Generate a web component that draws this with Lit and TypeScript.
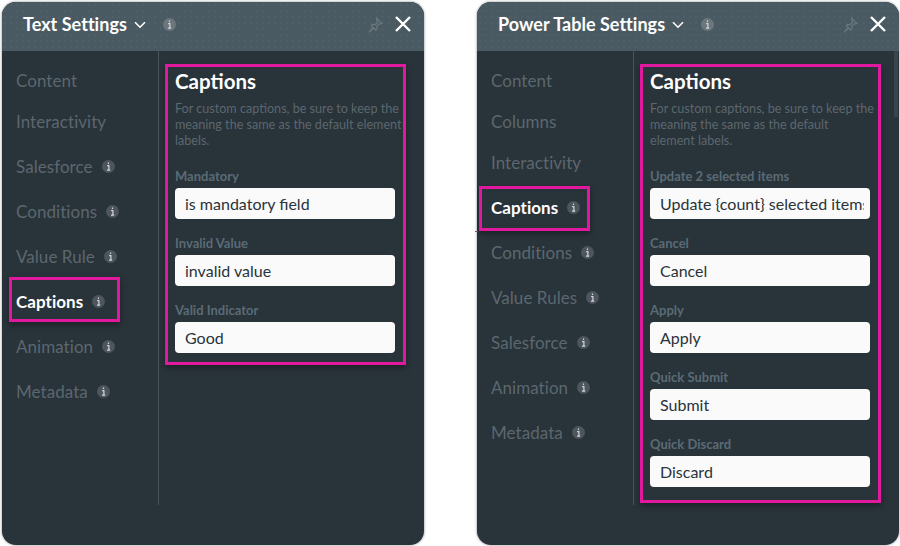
import { LitElement, html, css } from "lit";
import { customElement } from "lit/decorators.js";

const info = html`<svg class="info" viewBox="0 0 13 13" width="13" height="13"><circle cx="6.5" cy="6.5" r="6.5" fill="#4c565c"/><path d="M6.5 2.4v1.6M5.1 5.6h1.8v4.4M5 10.2h3.2" stroke="#d2d6d8" stroke-width="1.2" fill="none"/></svg>`;

type Nav = { t: string; i?: boolean; a?: "one" | "two" };
type Field = { l: string; v: string };

@customElement("app-root")
export class AppRoot extends LitElement {
  static styles = css`
    :host { display: block; width: 900px; height: 546px; background: #fff; font-family: Lato, sans-serif; overflow: hidden; }
    .page { position: relative; display: flex; gap: 53px; padding: 2px 0 0 2px; height: 546px; box-sizing: border-box; }
    .panel { position: relative; width: 422px; height: 543px; border-radius: 14px; background: #29333a; overflow: hidden; box-shadow: 0 0 2px 1px #c4c6c7; flex: none; }
    .head { height: 49px; background-color: #4a5a62; background-image: radial-gradient(#55656c 0.6px, transparent 0.8px); background-size: 6px 6px; display: flex; align-items: center; padding: 0 13px 5px 21px; box-sizing: border-box; color: #fff; }
    .title { font-size: 18px; font-weight: 700; letter-spacing: 0.03px; }
    .chev { margin: 2px 17px 0 7px; }
    .head .info circle { fill: #6c777d; }
    .spacer { flex: 1; }
    .pin { margin-right: 12px; margin-top: 1px; }
    .body { display: flex; align-items: flex-start; }
    nav { width: 157px; height: 454px; border-right: 1px solid #47525a; padding: 15px 0 0 14px; box-sizing: border-box; flex: none; display: flex; flex-direction: column; }
    .item { height: 28px; margin-bottom: 13px; display: flex; align-items: center; gap: 9px; font-size: 17px; letter-spacing: 0.05px; color: #5c676e; flex: none; }
    .item.inf { margin-top: 4px; }
    .item.active { color: #fff; font-weight: 700; border: 3px solid #e0199f; height: 45px; width: 111px; box-sizing: border-box; box-shadow: 0 3px 6px rgba(0,0,0,.35); }
    .item.one { margin: -6px 0 6px -7px; padding: 3px 0 0 4px; }
    .item.two { margin: -3px 0 3px -12px; padding: 0 0 3px 9px; }
    section { margin: 13px 0 0 6px; width: 241px; border: 3px solid #e0199f; padding: 0 8px 9px 7px; box-sizing: border-box; box-shadow: 0 3px 6px rgba(0,0,0,.35); overflow: hidden; flex: none; }
    section.tall { padding-bottom: 13px; }
    h2 { margin: -1px 0 0; font-size: 20.5px; font-weight: 700; color: #fff; line-height: 30px; }
    p { margin: 5px 0 0; font-size: 12.6px; line-height: 16px; color: #5c676e; white-space: nowrap; }
    .field { margin-top: 14px; }
    .field:first-of-type { margin-top: 17px; }
    label { display: block; font-size: 13px; font-weight: 700; color: #5a6b75; line-height: 21px; }
    .input { height: 31px; width: 220px; background: #fafafa; border-radius: 4px; font-size: 16px; line-height: 31px; color: #29333a; padding: 0 6px 0 10px; box-sizing: border-box; margin-top: 1px; }
    .input span { display: block; white-space: nowrap; overflow: hidden; }
    .thumb { position: absolute; right: 1px; top: 49px; width: 4px; height: 66px; background: #3a454b; }
    .stub { position: absolute; left: 475px; top: 231px; width: 3px; height: 1px; background: #8a3f78; }
  `;

  private panel(title: string, nav: Nav[], desc: unknown, fields: Field[], scroll: boolean) {
    return html`<div class="panel">
      <div class="head">
        <span class="title">${title}</span>
        <svg class="chev" width="12" height="8" viewBox="0 0 12 8"><path d="M1 1.2l5 5 5-5" stroke="#fff" stroke-width="1.6" fill="none"/></svg>
        ${info}
        <span class="spacer"></span>
        <svg class="pin" width="16" height="16" viewBox="0 0 16 16"><path d="M9.6 1.2l5.2 5.2-1.5.7-1-.4-2.6 2.6.2 2.6-1.2 1.2-2-2-4.7 4.2 4.2-4.7-2-2 1.2-1.2 2.6.2 2.6-2.6-.4-1z" stroke="#6d797f" stroke-width="1.1" fill="none"/></svg>
        <svg width="16" height="16" viewBox="0 0 16 16"><path d="M1 1l14 14M15 1L1 15" stroke="#fff" stroke-width="2.4"/></svg>
      </div>
      <div class="body">
        <nav>
          ${nav.map((n) => html`<div class="item ${n.i ? "inf" : ""} ${n.a ? "active " + n.a : ""}">${n.t}${n.i ? info : ""}</div>`)}
        </nav>
        <section class="${scroll ? "tall" : ""}">
          <h2>Captions</h2>
          <p>${desc}</p>
          ${fields.map((f) => html`<div class="field"><label>${f.l}</label><div class="input"><span>${f.v}</span></div></div>`)}
        </section>
      </div>
      ${scroll ? html`<div class="thumb"></div>` : ""}
    </div>`;
  }

  render() {
    return html`<div class="page">
      ${this.panel(
        "Text Settings",
        [
          { t: "Content" }, { t: "Interactivity" }, { t: "Salesforce", i: true },
          { t: "Conditions", i: true }, { t: "Value Rule", i: true },
          { t: "Captions", i: true, a: "one" }, { t: "Animation", i: true }, { t: "Metadata", i: true },
        ],
        html`For custom captions, be sure to keep the<br />meaning the same as the default element<br />labels.`,
        [
          { l: "Mandatory", v: "is mandatory field" },
          { l: "Invalid Value", v: "invalid value" },
          { l: "Valid Indicator", v: "Good" },
        ],
        false
      )}
      ${this.panel(
        "Power Table Settings",
        [
          { t: "Content" }, { t: "Columns" }, { t: "Interactivity" },
          { t: "Captions", i: true, a: "two" }, { t: "Conditions", i: true }, { t: "Value Rules", i: true },
          { t: "Salesforce", i: true }, { t: "Animation", i: true }, { t: "Metadata", i: true },
        ],
        html`For custom captions, be sure to keep the<br />meaning the same as the default<br />element labels.`,
        [
          { l: "Update 2 selected items", v: "Update {count} selected items" },
          { l: "Cancel", v: "Cancel" },
          { l: "Apply", v: "Apply" },
          { l: "Quick Submit", v: "Submit" },
          { l: "Quick Discard", v: "Discard" },
        ],
        true
      )}
      <div class="stub"></div>
    </div>`;
  }
}
